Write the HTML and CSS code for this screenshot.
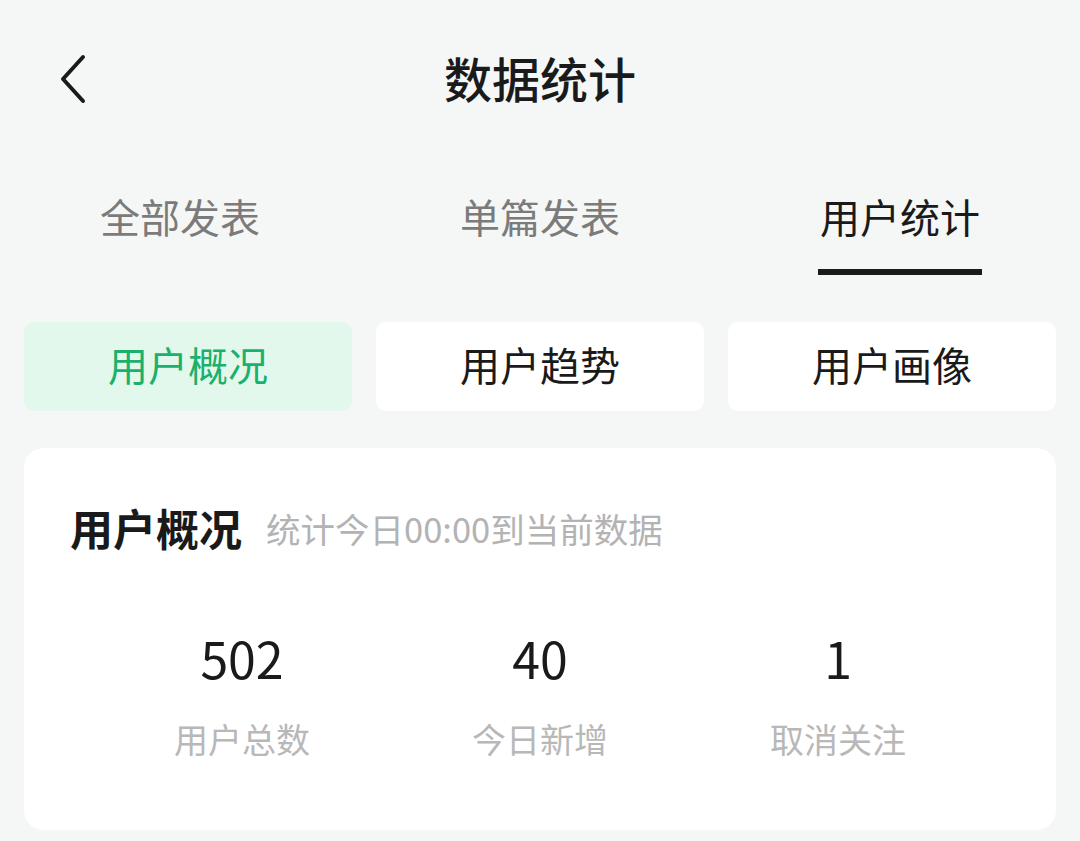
FILE: index.html
```html
<!DOCTYPE html>
<html lang="zh-CN">
<head>
<meta charset="utf-8">
<title>数据统计</title>
<link rel="stylesheet" href="styles.css">
</head>
<body>
<div class="page">
  <header class="topbar">
    <button class="back" aria-label="返回">
      <svg width="30" height="50" viewBox="0 0 30 50"><path d="M25 3 L5 25 L25 47" fill="none" stroke="#1a1a1a" stroke-width="4" stroke-linecap="round" stroke-linejoin="round"/></svg>
    </button>
    <h1 class="title">数据统计</h1>
  </header>
  <nav class="tabs">
    <div class="tab">全部发表</div>
    <div class="tab">单篇发表</div>
    <div class="tab active"><span class="tab-label">用户统计</span></div>
  </nav>
  <div class="segments">
    <div class="seg active">用户概况</div>
    <div class="seg">用户趋势</div>
    <div class="seg">用户画像</div>
  </div>
  <section class="card">
    <div class="card-head">
      <h2 class="card-title">用户概况</h2>
      <span class="card-sub">统计今日00:00到当前数据</span>
    </div>
    <div class="stats">
      <div class="stat"><div class="num">502</div><div class="label">用户总数</div></div>
      <div class="stat"><div class="num">40</div><div class="label">今日新增</div></div>
      <div class="stat"><div class="num">1</div><div class="label">取消关注</div></div>
    </div>
  </section>
</div>
</body>
</html>
```
FILE: styles.css
```css
* { box-sizing: border-box; }
html, body { margin: 0; padding: 0; }
body {
  background: #f5f7f6;
  font-family: "Noto Sans CJK SC", "Noto Sans", sans-serif;
  color: #1a1a1a;
  width: 1080px;
  height: 841px;
  overflow: hidden;
}
.page { padding: 0 24px; }
.topbar {
  position: relative;
  height: 160px;
  display: flex;
  align-items: center;
  justify-content: center;
  padding-bottom: 7px;
}
.back {
  position: absolute;
  left: 34px;
  top: 54px;
  background: none;
  border: 0;
  padding: 0;
  width: 30px;
  height: 50px;
}
.back svg { display: block; }
.title {
  margin: 0;
  font-size: 48px;
  font-weight: 500;
  line-height: 60px;
}
.tabs {
  display: grid;
  grid-template-columns: repeat(3, 1fr);
  margin: 0 -24px;
  padding-top: 28px;
}
.tab {
  display: flex;
  flex-direction: column;
  align-items: center;
  font-size: 40px;
  line-height: 56px;
  color: #7b7b7b;
}
.tab.active { color: #1a1a1a; }
.tab-label {
  display: flex;
  flex-direction: column;
  align-items: center;
}
.tab-label::after {
  content: "";
  display: block;
  width: 164px;
  height: 6px;
  margin-top: 25px;
  background: #1a1a1a;
}
.segments {
  display: grid;
  grid-template-columns: repeat(3, 1fr);
  column-gap: 24px;
  margin-top: 47px;
}
.seg {
  height: 89px;
  background: #ffffff;
  border-radius: 10px;
  display: flex;
  align-items: center;
  justify-content: center;
  font-size: 40px;
  color: #1a1a1a;
  padding-bottom: 5px;
}
.seg.active {
  background: #e3f8ec;
  color: #1bb06c;
}
.card {
  margin-top: 37px;
  background: #ffffff;
  border-radius: 20px;
  padding: 49px 46px 0;
  height: 382px;
}
.card-head {
  display: flex;
  align-items: baseline;
  gap: 24px;
}
.card-title {
  margin: 0;
  font-size: 43px;
  font-weight: 700;
  line-height: 60px;
}
.card-sub {
  font-size: 34.5px;
  color: #b3b3b3;
  line-height: 60px;
  position: relative;
  top: -3px;
}
.stats {
  display: grid;
  grid-template-columns: repeat(3, 1fr);
  padding: 0 23px;
  margin-top: 66px;
}
.stat {
  display: flex;
  flex-direction: column;
  align-items: center;
}
.num {
  font-size: 50px;
  line-height: 60px;
  color: #1a1a1a;
}
.label {
  margin-top: 30px;
  font-size: 34px;
  line-height: 44px;
  color: #b8b8b8;
}
```
